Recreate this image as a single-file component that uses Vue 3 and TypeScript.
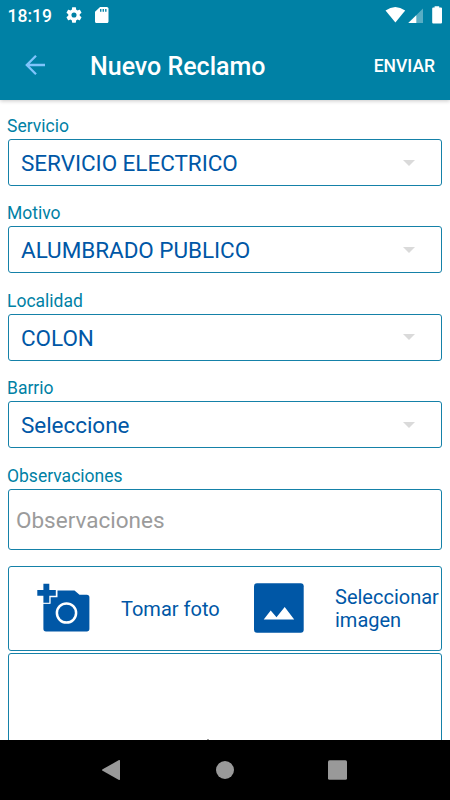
<script setup lang="ts">
interface Field {
  label: string
  value: string
}

const fields: Field[] = [
  { label: 'Servicio', value: 'SERVICIO ELECTRICO' },
  { label: 'Motivo', value: 'ALUMBRADO PUBLICO' },
  { label: 'Localidad', value: 'COLON' },
  { label: 'Barrio', value: 'Seleccione' },
]
</script>

<template>
  <div class="screen">
    <header class="top">
      <div class="status">
        <span class="clock">18:19</span>
        <svg class="gear" viewBox="2 2 20 20" width="16" height="16">
          <path fill="#fff" fill-rule="evenodd" d="M19.14 12.94c.04-.3.06-.61.06-.94 0-.32-.02-.64-.07-.94l2.03-1.58c.18-.14.23-.41.12-.61l-1.92-3.32c-.12-.22-.37-.29-.59-.22l-2.39.96c-.5-.38-1.03-.7-1.62-.94l-.36-2.54c-.04-.24-.24-.41-.48-.41h-3.84c-.24 0-.43.17-.47.41l-.36 2.54c-.59.24-1.13.57-1.62.94l-2.39-.96c-.22-.08-.47 0-.59.22L2.74 8.87c-.12.21-.08.47.12.61l2.03 1.58c-.05.3-.09.63-.09.94s.02.64.07.94l-2.03 1.58c-.18.14-.23.41-.12.61l1.92 3.32c.12.22.37.29.59.22l2.39-.96c.5.38 1.03.7 1.62.94l.36 2.54c.05.24.24.41.48.41h3.84c.24 0 .44-.17.47-.41l.36-2.54c.59-.24 1.13-.56 1.62-.94l2.39.96c.22.08.47 0 .59-.22l1.92-3.32c.12-.22.07-.47-.12-.61l-2.01-1.58zM12 15.2A3.2 3.2 0 1 1 12 8.8a3.2 3.2 0 0 1 0 6.4z" />
        </svg>
        <svg class="card" viewBox="4 2 16 20" width="13.500" height="16" preserveAspectRatio="none">
          <path fill="#fff" fill-rule="evenodd" d="M18 2h-8L4.02 8 4 20c0 1.100.9 2 2 2h12c1.100 0 2-.9 2-2V4c0-1.100-.9-2-2-2zM10 4.500h1.600v3.500H10zM13 4.500h1.600v3.500H13zM16 4.500h1.600v3.500H16z" />
        </svg>
        <svg class="signals" viewBox="385 6 57 18" width="57" height="18">
          <path fill="#fff" d="M385.500 10.600Q395.300 3.400 405.200 10.600L395.400 22.500Z" />
          <path fill="#fff" fill-opacity=".35" d="M423 8.500V23H408.300Z" />
          <path fill="#fff" d="M416.300 15.200V23H408.300Z" />
          <path fill="#fff" d="M434.600 7.500V6.300H439.200V7.500H441Q442 7.500 442 8.500V22.500Q442 23.500 441 23.500H433.200Q432.200 23.500 432.200 22.500V8.500Q432.200 7.500 433.200 7.500Z" />
        </svg>
      </div>
      <div class="toolbar">
        <svg class="back" viewBox="0 0 20 20" width="20" height="20">
          <path fill="none" stroke="#7fc4fc" stroke-width="2.300" d="M20 10H2M11 .8L1.800 10L11 19.200" />
        </svg>
        <h1 class="title">Nuevo Reclamo</h1>
        <button class="send">ENVIAR</button>
      </div>
    </header>

    <main class="form">
      <section v-for="f in fields" :key="f.label" class="field">
        <label class="label">{{ f.label }}</label>
        <div class="box select">
          <span class="value">{{ f.value }}</span>
          <svg viewBox="0 0 12 6" width="12" height="6"><path fill="#dadada" d="M0 0H12L6 6Z" /></svg>
        </div>
      </section>
      <section class="field notes">
        <label class="label">Observaciones</label>
        <div class="box textarea">Observaciones</div>
      </section>
      <div class="box photos">
        <svg class="camera" viewBox="37 582.500 54 51" width="54" height="51">
          <path fill="#0057a6" d="M43.400 603.200H50.600V596.800H57.500V590H74.500L79.500 594.200H86.800Q89.400 594.200 89.400 596.800V628.300Q89.400 630.900 86.800 630.900H46Q43.400 630.900 43.400 628.300Z" />
          <path fill="#0057a6" stroke="#fff" stroke-width="1.600" paint-order="stroke" d="M43.400 583.200H49.300V589.600H55.800V595.200H49.300V602.200H43.400V595.200H37.300V589.600H43.400Z" />
          <circle cx="66.500" cy="612.500" r="9.600" fill="none" stroke="#fff" stroke-width="2.500" />
        </svg>
        <span class="take">Tomar foto</span>
        <svg class="image" viewBox="254 583 50 50" width="50" height="50">
          <rect x="254" y="583.200" width="49.700" height="49.600" rx="3" fill="#0057a6" />
          <path fill="#fff" d="M263.700 619.600L270.700 610.600L276.500 617.200L284.700 607L294.200 619.600Z" />
        </svg>
        <span class="pick">Seleccionar<br>imagen</span>
      </div>
      <div class="box preview"><i class="speck"></i></div>
    </main>

    <nav class="nav">
      <svg viewBox="0 0 450 60" width="450" height="60">
        <path fill="#999" d="M102.600 29.200L119 20.100Q120 19.700 120 20.800V39.200Q120 40.300 119 39.900L102.600 30.800Q101.400 30 102.600 29.200Z" />
        <circle cx="225" cy="30" r="9" fill="#999" />
        <rect x="328" y="20.300" width="19" height="19.400" rx="1.500" fill="#999" />
      </svg>
    </nav>
  </div>
</template>

<style>
body {
  margin: 0;
}
</style>

<style scoped>
.screen {
  width: 450px;
  height: 800px;
  display: flex;
  flex-direction: column;
  overflow: hidden;
  background: #fff;
  font-family: Roboto, sans-serif;
}
.top {
  flex: none;
  height: 100px;
  background: #0081a5;
  box-shadow: 0 1px 4px rgba(0, 0, 0, 0.22);
  color: #fff;
}
.status {
  height: 32px;
  display: flex;
  align-items: center;
  box-sizing: border-box;
  padding: 0 8px 0 7.5px;
}
.clock {
  width: 58.5px;
  font-size: 17.5px;
  font-weight: 500;
  line-height: 32px;
}
.gear {
  margin-top: -2px;
}
.card {
  margin: -2px 0 0 13px;
}
.signals {
  margin: -2px 0 0 auto;
}
.toolbar {
  height: 68px;
  display: flex;
  align-items: center;
  box-sizing: border-box;
  padding: 0 15px 0 25px;
}
.back {
  margin-top: -2px;
}
.title {
  margin: 2px 0 0 45px;
  font-size: 25px;
  font-weight: 500;
  line-height: 66px;
}
.send {
  margin: 0 0 0 auto;
  padding: 0;
  border: 0;
  background: none;
  color: #fff;
  font: 500 17.5px Roboto, sans-serif;
}
.form {
  flex: 1;
  min-height: 0;
  overflow: hidden;
  padding: 15px 8px 0;
  clip-path: inset(0);
}
.top {
  position: relative;
  z-index: 1;
}
.field {
  height: 87.48px;
}
.notes {
  height: 101px;
}
.label {
  display: block;
  height: 24px;
  margin-left: -1px;
  color: #0081a5;
  font-size: 17.5px;
  font-weight: 385;
  line-height: 22px;
}
.box {
  box-sizing: border-box;
  border: 1px solid #1581a8;
  border-radius: 3px;
  color: #0057a6;
  font-weight: 375;
}
.select {
  height: 47px;
  display: flex;
  align-items: center;
  justify-content: space-between;
  padding: 0 26px 0 12px;
  font-size: 22.5px;
}
.value {
  padding-top: 1px;
  letter-spacing: -0.05px;
}
.textarea {
  height: 61.5px;
  padding-left: 7px;
  color: #9b9b9b;
  font-size: 22.5px;
  line-height: 60px;
}
.photos {
  height: 85px;
  display: flex;
  align-items: center;
  padding-left: 28px;
  font-size: 20px;
  line-height: 23.5px;
  white-space: nowrap;
}
.take {
  width: 133px;
  margin: 2px 0 0 30px;
}
.camera,
.image {
  flex: none;
}
.image {
  margin-top: -1px;
}
.pick {
  margin: 2px 0 0 31px;
}
.preview {
  height: 120px;
  margin-top: 2px;
  display: flex;
  justify-content: center;
}
.speck {
  width: 2px;
  height: 1px;
  margin: 85px 34px 0 0;
  background: #999;
}
.nav {
  flex: none;
  height: 60px;
  background: #000;
}
.nav svg {
  display: block;
}
</style>
